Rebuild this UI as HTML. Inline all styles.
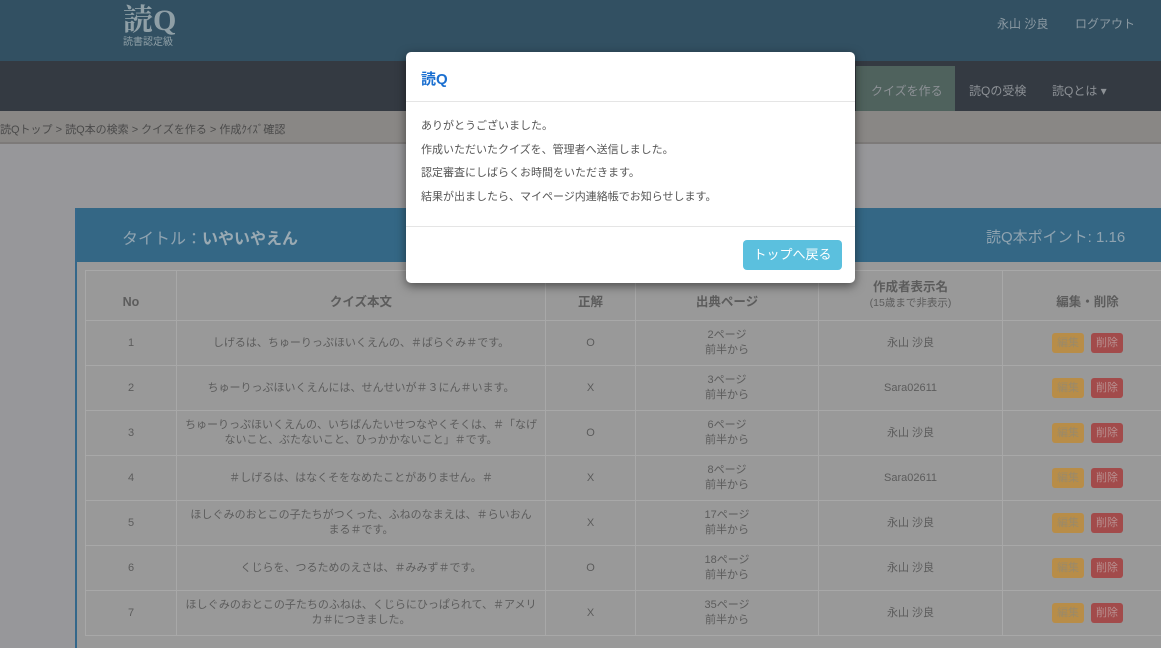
<!DOCTYPE html>
<html><head><meta charset="utf-8"><style>
*{box-sizing:border-box;margin:0;padding:0}
body{width:1161px;height:634px;overflow:hidden;background:#97979a;font-family:"Liberation Sans","Noto Sans CJK JP",sans-serif;color:#5a5a5a;position:relative;font-size:12px}
.hdr{position:absolute;left:0;top:0;width:1161px;height:61px;background:#325062}
.logo{position:absolute;left:123px;top:4px;color:#8f9fa6;font-family:"Liberation Serif","Noto Serif CJK SC",serif;font-size:30px;line-height:34px;font-weight:bold}
.logo small{display:block;font-size:10px;line-height:10px;font-family:"Liberation Sans","Noto Sans CJK JP",sans-serif;font-weight:normal}
.hlink{position:absolute;top:15px;color:#8c9aa3;font-size:12px}
.nav{position:absolute;left:0;top:61px;width:1161px;height:50px;background:#343a42}
.nav span{position:absolute;top:21px;color:#8d9196;font-size:12px}
.act{position:absolute;left:856px;top:5px;width:99px;height:45px;background:#4f625d}
.bc{position:absolute;left:0;top:111px;width:1161px;height:33px;background:#898785;border-bottom:2px solid #7d7a79;font-size:11px;color:#4a4a4a;padding:10px 0 0 0}
.panel{position:absolute;left:75px;top:208px;width:1100px;height:440px;background:#999;border-left:2px solid #34678a}
.ph{height:54px;background:#346785;color:#8fa3b0;font-size:16px;padding:17px 0 0 45px;position:relative}
.ph b{color:#9aaab3}
.ph .pt{position:absolute;left:909px;top:18px;font-size:15px}
table{position:absolute;left:8px;top:62px;border-collapse:collapse}
td,th{border:1px solid #a8a8a8;text-align:center;font-size:11px;color:#5c5c5c;font-weight:normal;line-height:15px}
th{font-weight:bold;font-size:12.5px;height:50px;padding-top:14px}
td{height:45px}
.e,.d{display:inline-block;width:32px;height:20px;border-radius:3px;font-size:11px;line-height:20px;color:#9a8a6a}
.e{background:#b88d48;margin-right:7px}.d{background:#a24b4b;color:#b89090}
.modal{position:absolute;left:406px;top:52px;width:449px;height:231px;background:#fff;border-radius:5px;box-shadow:0 3px 10px rgba(0,0,0,.5)}
.mh{height:50px;border-bottom:1px solid #e5e5e5;padding:16px 0 0 15px;color:#1a6fd0;font-size:15px;font-weight:bold}
.mb{padding:13px 15px 0;font-size:11px;color:#555;line-height:23.5px;height:125px;border-bottom:1px solid #e5e5e5}
.btn{position:absolute;left:337px;top:188px;width:99px;height:30px;background:#5bc0de;border-radius:4px;color:#fff;font-size:13px;text-align:center;line-height:30px}
</style></head><body>
<div class="hdr"><div class="logo">読Q<small>読書認定級</small></div>
<span class="hlink" style="left:997px">永山 沙良</span><span class="hlink" style="left:1075px">ログアウト</span></div>
<div class="nav"><div class="act"></div><span style="left:871px">クイズを作る</span><span style="left:969px">読Qの受検</span><span style="left:1052px">読Qとは ▾</span></div>
<div class="bc">読Qトップ &gt; 読Q本の検索 &gt; クイズを作る &gt; 作成ｸｲｽﾞ確認</div>
<div class="panel"><div class="ph">タイトル：<b>いやいやえん</b><span class="pt">読Q本ポイント: 1.16</span></div>
<table>
<tr><th style="width:91px">No</th><th style="width:369px">クイズ本文</th><th style="width:90px">正解</th><th style="width:183px">出典ページ</th><th style="width:184px;padding-top:0">作成者表示名<br><span style="font-weight:normal;font-size:10.5px">(15歳まで非表示)</span></th><th style="width:170px">編集・削除</th></tr>
<tr><td>1</td><td>しげるは、ちゅーりっぷほいくえんの、＃ばらぐみ＃です。</td><td>O</td><td>2ページ<br>前半から</td><td>永山 沙良</td><td><span class="e">編集</span><span class="d">削除</span></td></tr>
<tr><td>2</td><td>ちゅーりっぷほいくえんには、せんせいが＃３にん＃います。</td><td>X</td><td>3ページ<br>前半から</td><td>Sara02611</td><td><span class="e">編集</span><span class="d">削除</span></td></tr>
<tr><td>3</td><td style="padding:0 8px">ちゅーりっぷほいくえんの、いちばんたいせつなやくそくは、＃「なげないこと、ぶたないこと、ひっかかないこと」＃です。</td><td>O</td><td>6ページ<br>前半から</td><td>永山 沙良</td><td><span class="e">編集</span><span class="d">削除</span></td></tr>
<tr><td>4</td><td>＃しげるは、はなくそをなめたことがありません。＃</td><td>X</td><td>8ページ<br>前半から</td><td>Sara02611</td><td><span class="e">編集</span><span class="d">削除</span></td></tr>
<tr><td>5</td><td style="padding:0 8px">ほしぐみのおとこの子たちがつくった、ふねのなまえは、＃らいおんまる＃です。</td><td>X</td><td>17ページ<br>前半から</td><td>永山 沙良</td><td><span class="e">編集</span><span class="d">削除</span></td></tr>
<tr><td>6</td><td>くじらを、つるためのえさは、＃みみず＃です。</td><td>O</td><td>18ページ<br>前半から</td><td>永山 沙良</td><td><span class="e">編集</span><span class="d">削除</span></td></tr>
<tr><td>7</td><td style="padding:0 8px">ほしぐみのおとこの子たちのふねは、くじらにひっぱられて、＃アメリカ＃につきました。</td><td>X</td><td>35ページ<br>前半から</td><td>永山 沙良</td><td><span class="e">編集</span><span class="d">削除</span></td></tr>
</table></div>
<div class="modal"><div class="mh">読Q</div>
<div class="mb">ありがとうございました。<br>作成いただいたクイズを、管理者へ送信しました。<br>認定審査にしばらくお時間をいただきます。<br>結果が出ましたら、マイページ内連絡帳でお知らせします。</div>
<div class="btn">トップへ戻る</div></div>
</body></html>
